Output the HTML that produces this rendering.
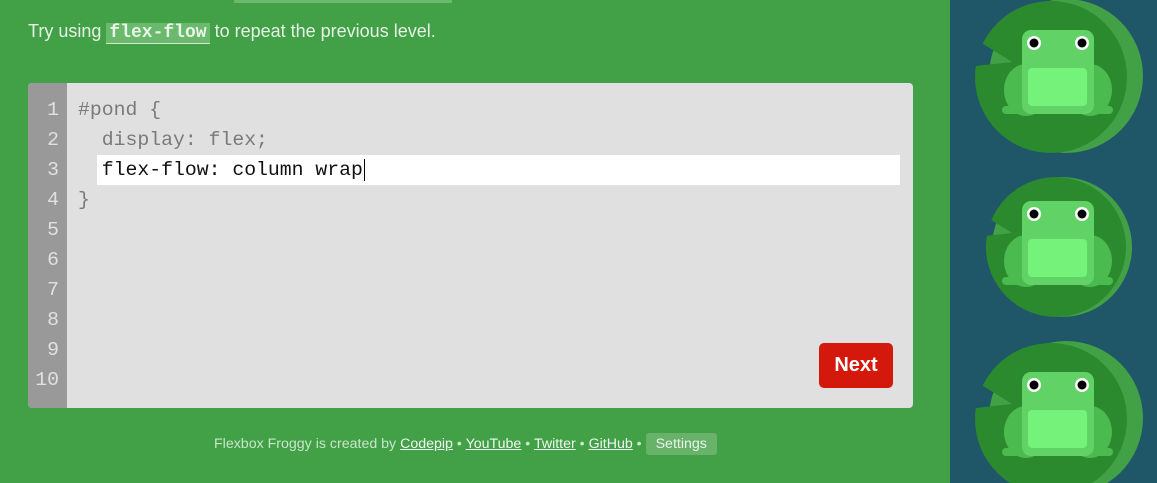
<!DOCTYPE html>
<html><head><style>
body{margin:0;width:1157px;height:483px;background:#42a047;position:relative;overflow:hidden;font-family:"Liberation Sans",sans-serif;}
.t{position:absolute;left:28px;top:21px;font-size:18px;color:#e6f2e6;}
.code{background:#6ab96c;color:#e8f5e8;font-family:"Liberation Mono",monospace;font-weight:bold;padding:0 3px;border-bottom:1px solid #cfe8cf;}
.ed{position:absolute;left:28px;top:83px;width:885px;height:325px;background:#e0e0e0;border-radius:4px;overflow:hidden;}
.gut{position:absolute;left:0;top:0;width:39px;height:100%;background:#999;}
.ln{position:absolute;left:0;width:31px;text-align:right;font-family:"Liberation Mono",monospace;font-size:19.8px;color:#e0e0e0;}
.cl{position:absolute;left:50px;font-family:"Liberation Mono",monospace;font-size:19.8px;color:#7a7a7a;white-space:pre;}
.inp{position:absolute;left:69px;top:72px;width:803px;height:30px;background:#fff;}
.btn{position:absolute;left:791px;top:260px;width:74px;height:45px;background:#d4190c;border-radius:5px;color:#fff;font-weight:bold;font-size:20px;text-align:center;line-height:44px;}
.f{position:absolute;top:433px;left:214px;font-size:14.2px;color:#c8e6c9;}
.f u{color:#f0f8f0;}
.set{display:inline-block;background:#68b26a;color:#e8f5e8;padding:3px 10px;border-radius:3px;}
.r{position:absolute;left:950px;top:0;}
</style></head><body>
<div style="position:absolute;left:234px;top:0;width:218px;height:3px;background:#6ab96c"></div>
<div class="t">Try using <span class="code">flex-flow</span> to repeat the previous level.</div>
<div class="ed">
<div class="gut"></div>
<div class="ln" style="top:16px">1</div><div class="ln" style="top:46px">2</div><div class="ln" style="top:76px">3</div><div class="ln" style="top:106px">4</div><div class="ln" style="top:136px">5</div><div class="ln" style="top:166px">6</div><div class="ln" style="top:196px">7</div><div class="ln" style="top:226px">8</div><div class="ln" style="top:256px">9</div><div class="ln" style="top:286px">10</div>
<div class="cl" style="top:16px">#pond {</div>
<div class="cl" style="top:46px">  display: flex;</div>
<div class="inp"></div>
<div class="cl" style="top:76px;color:#111">  flex-flow: column wrap<span style="border-left:1.5px solid #000;margin-left:1px"></span></div>
<div class="cl" style="top:106px">}</div>
<div class="btn">Next</div>
</div>
<div class="f">Flexbox Froggy is created by <u>Codepip</u> • <u>YouTube</u> • <u>Twitter</u> • <u>GitHub</u> • <span class="set">Settings</span></div>
<svg class="r" width="207" height="483" viewBox="0 0 207 483">
<rect width="207" height="483" fill="#1f5768"/>
<defs>
<clipPath id="cp"><path d="M-10 -20 H210 V170 H-10 V70 L62 62 L30 42 L-10 36 Z"/></clipPath>
<g id="frog">
<ellipse cx="76" cy="90" rx="22" ry="26" fill="#4bbb4f"/>
<ellipse cx="140" cy="90" rx="22" ry="26" fill="#4bbb4f"/>
<rect x="52" y="106" width="111" height="8" rx="4" fill="#4bbb4f"/>
<rect x="72" y="30" width="72" height="84" rx="9" fill="#61d265"/>
<rect x="78" y="68" width="59" height="38" rx="4" fill="#74f27a"/>
<circle cx="84" cy="43" r="7" fill="#fff"/><circle cx="84" cy="43" r="4.5" fill="#000"/>
<circle cx="132" cy="43" r="7" fill="#fff"/><circle cx="132" cy="43" r="4.5" fill="#000"/>
</g>
</defs>
<g>
<circle cx="116" cy="76" r="77" fill="#42a047"/>
<circle cx="101" cy="77" r="76" fill="#2c8a2e" clip-path="url(#cp)"/>
<use href="#frog"/>
</g>
<g transform="translate(0,171)">
<circle cx="112" cy="76" r="70" fill="#42a047"/>
<circle cx="106" cy="76" r="70" fill="#2c8a2e" clip-path="url(#cp)"/>
<use href="#frog"/>
</g>
<g transform="translate(0,342)">
<circle cx="116" cy="76" r="77" fill="#42a047"/>
<circle cx="101" cy="77" r="76" fill="#2c8a2e" clip-path="url(#cp)"/>
<use href="#frog"/>
</g>
</svg>
</body></html>
